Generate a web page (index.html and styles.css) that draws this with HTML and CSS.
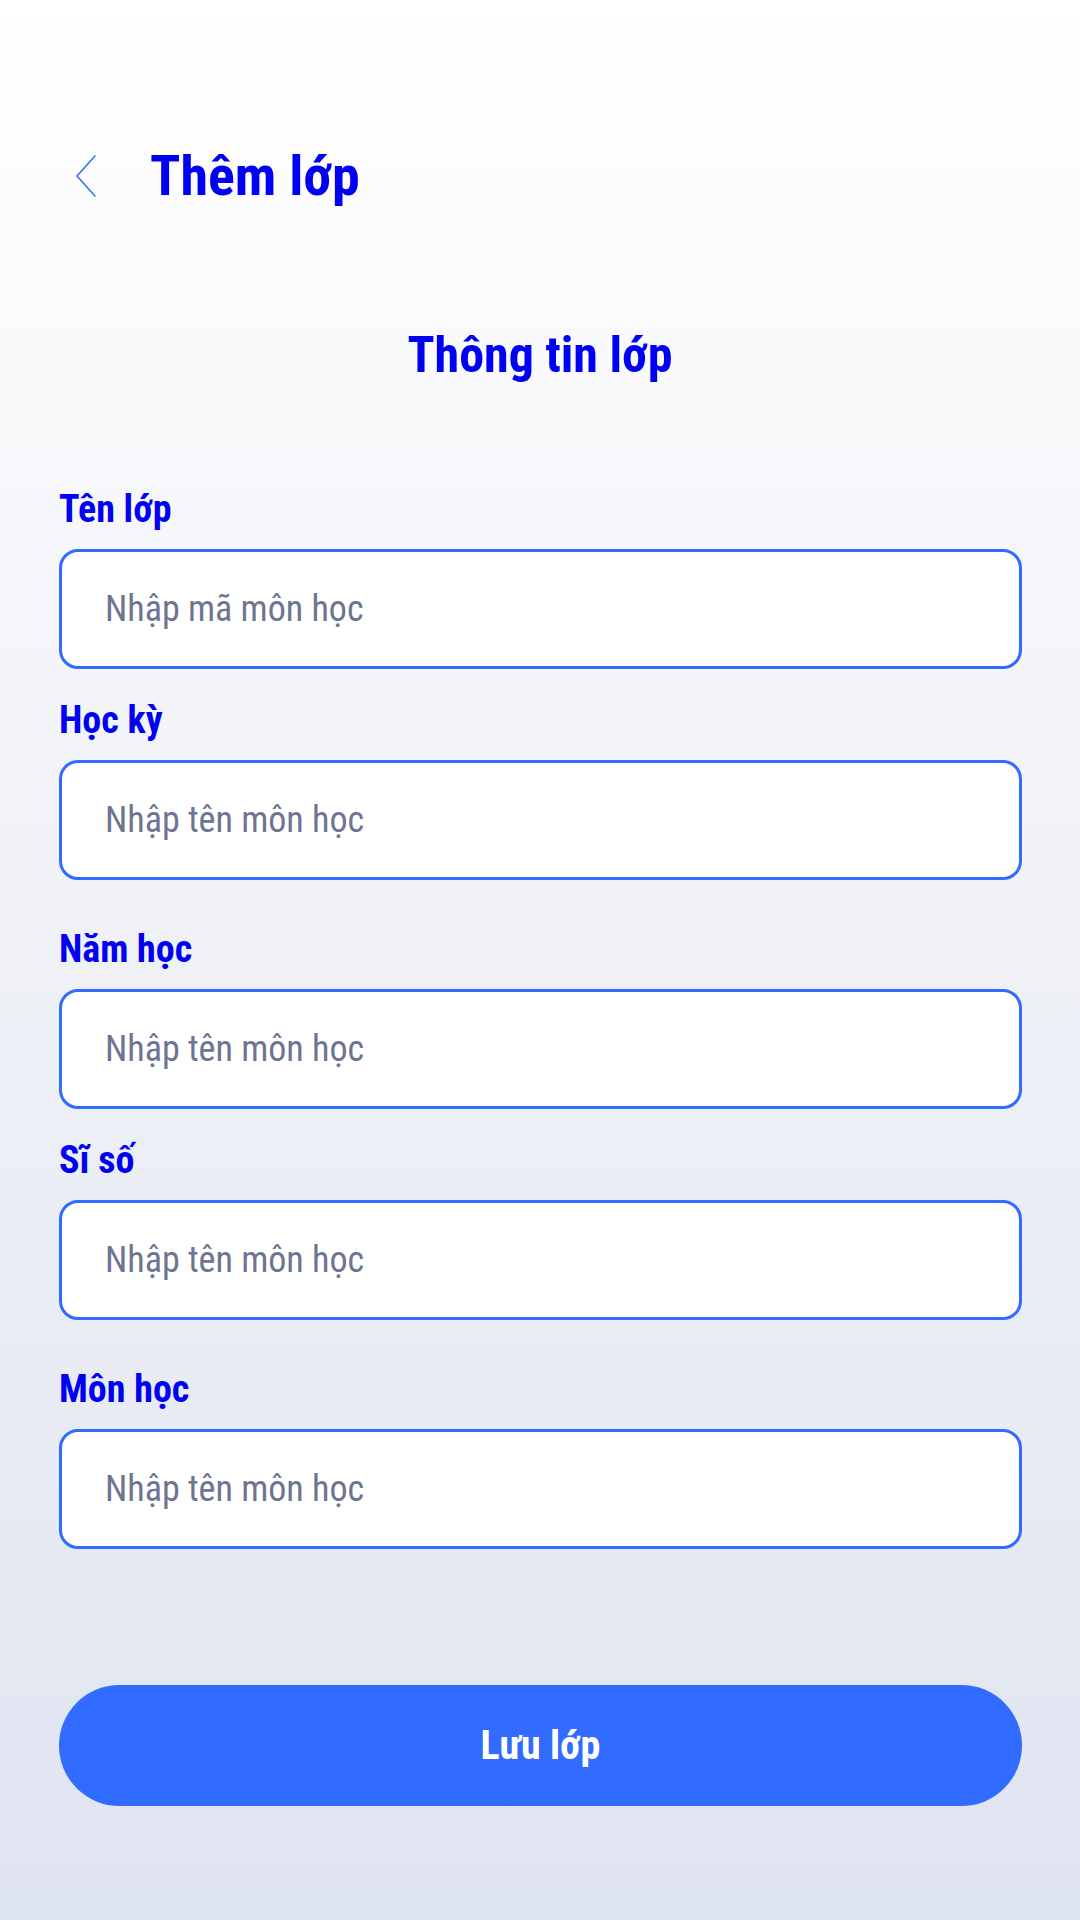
FILE: index.html
```html
<!DOCTYPE html>
<html lang="vi">
<head>
<meta charset="utf-8">
<title>Thêm lớp</title>
<link rel="stylesheet" href="styles.css">
</head>
<body>
<div class="screen">
  <header class="topbar">
    <button class="back" aria-label="Quay lại">
      <svg width="22" height="44" viewBox="0 0 22 44"><polyline points="20,2 2,22 20,42" fill="none" stroke="#3b6fe8" stroke-width="1.6" stroke-linejoin="round" stroke-linecap="round"/></svg>
    </button>
    <h1 class="title">Thêm lớp</h1>
  </header>

  <h2 class="section-title">Thông tin lớp</h2>

  <form class="form">
    <div class="pair">
      <label class="field">
        <span class="label">Tên lớp</span>
        <input class="input" type="text" placeholder="Nhập mã môn học">
      </label>
      <label class="field">
        <span class="label">Học kỳ</span>
        <input class="input" type="text" placeholder="Nhập tên môn học">
      </label>
    </div>
    <div class="pair">
      <label class="field">
        <span class="label">Năm học</span>
        <input class="input" type="text" placeholder="Nhập tên môn học">
      </label>
      <label class="field">
        <span class="label">Sĩ số</span>
        <input class="input" type="text" placeholder="Nhập tên môn học">
      </label>
    </div>
    <div class="pair">
      <label class="field">
        <span class="label">Môn học</span>
        <input class="input" type="text" placeholder="Nhập tên môn học">
      </label>
    </div>
    <button type="button" class="save">Lưu lớp</button>
  </form>
</div>
</body>
</html>
```
FILE: styles.css
```css
* { box-sizing: border-box; }
html, body { margin: 0; padding: 0; }
body {
  width: 1080px;
  height: 1920px;
  background: linear-gradient(180deg, #ffffff 0%, #f4f5f9 35%, #dfe4f1 100%);
  font-family: "Roboto Condensed", Roboto, "Noto Sans", sans-serif;
  font-stretch: condensed;
}
.screen {
  padding-top: 141px;
}
.topbar {
  display: flex;
  align-items: center;
  padding-left: 75px;
  height: 70px;
}
.back {
  background: none;
  border: 0;
  padding: 0;
  width: 22px;
  height: 44px;
  display: flex;
}
.title {
  margin: 0 0 0 53px;
  font-size: 56px;
  line-height: 70px;
  font-weight: 700;
  color: #0000f2;
}
.section-title {
  margin: 113px 0 0;
  text-align: center;
  font-size: 50px;
  line-height: 62px;
  font-weight: 700;
  color: #0000f2;
}
.form {
  margin-top: 99px;
  padding: 0 58px 0 59px;
  display: flex;
  flex-direction: column;
  gap: 45px;
}
.pair {
  display: flex;
  flex-direction: column;
  gap: 27px;
}
.field {
  display: flex;
  flex-direction: column;
  gap: 16px;
}
.label {
  font-size: 38px;
  line-height: 48px;
  font-weight: 700;
  color: #0000f2;
}
.input {
  height: 120px;
  width: 100%;
  border: 3px solid #316bff;
  border-radius: 19px;
  background: #ffffff;
  padding: 0 20px 0 43px;
  font-family: inherit;
  font-stretch: condensed;
  font-size: 36px;
  color: #222;
  outline: none;
}
.input::placeholder {
  color: #6d7592;
  opacity: 1;
}
.save {
  margin-top: 91px;
  height: 121px;
  border: 0;
  border-radius: 61px;
  background: #316bff;
  color: #ffffff;
  font-family: inherit;
  font-stretch: condensed;
  font-size: 40px;
  font-weight: 700;
}
```
